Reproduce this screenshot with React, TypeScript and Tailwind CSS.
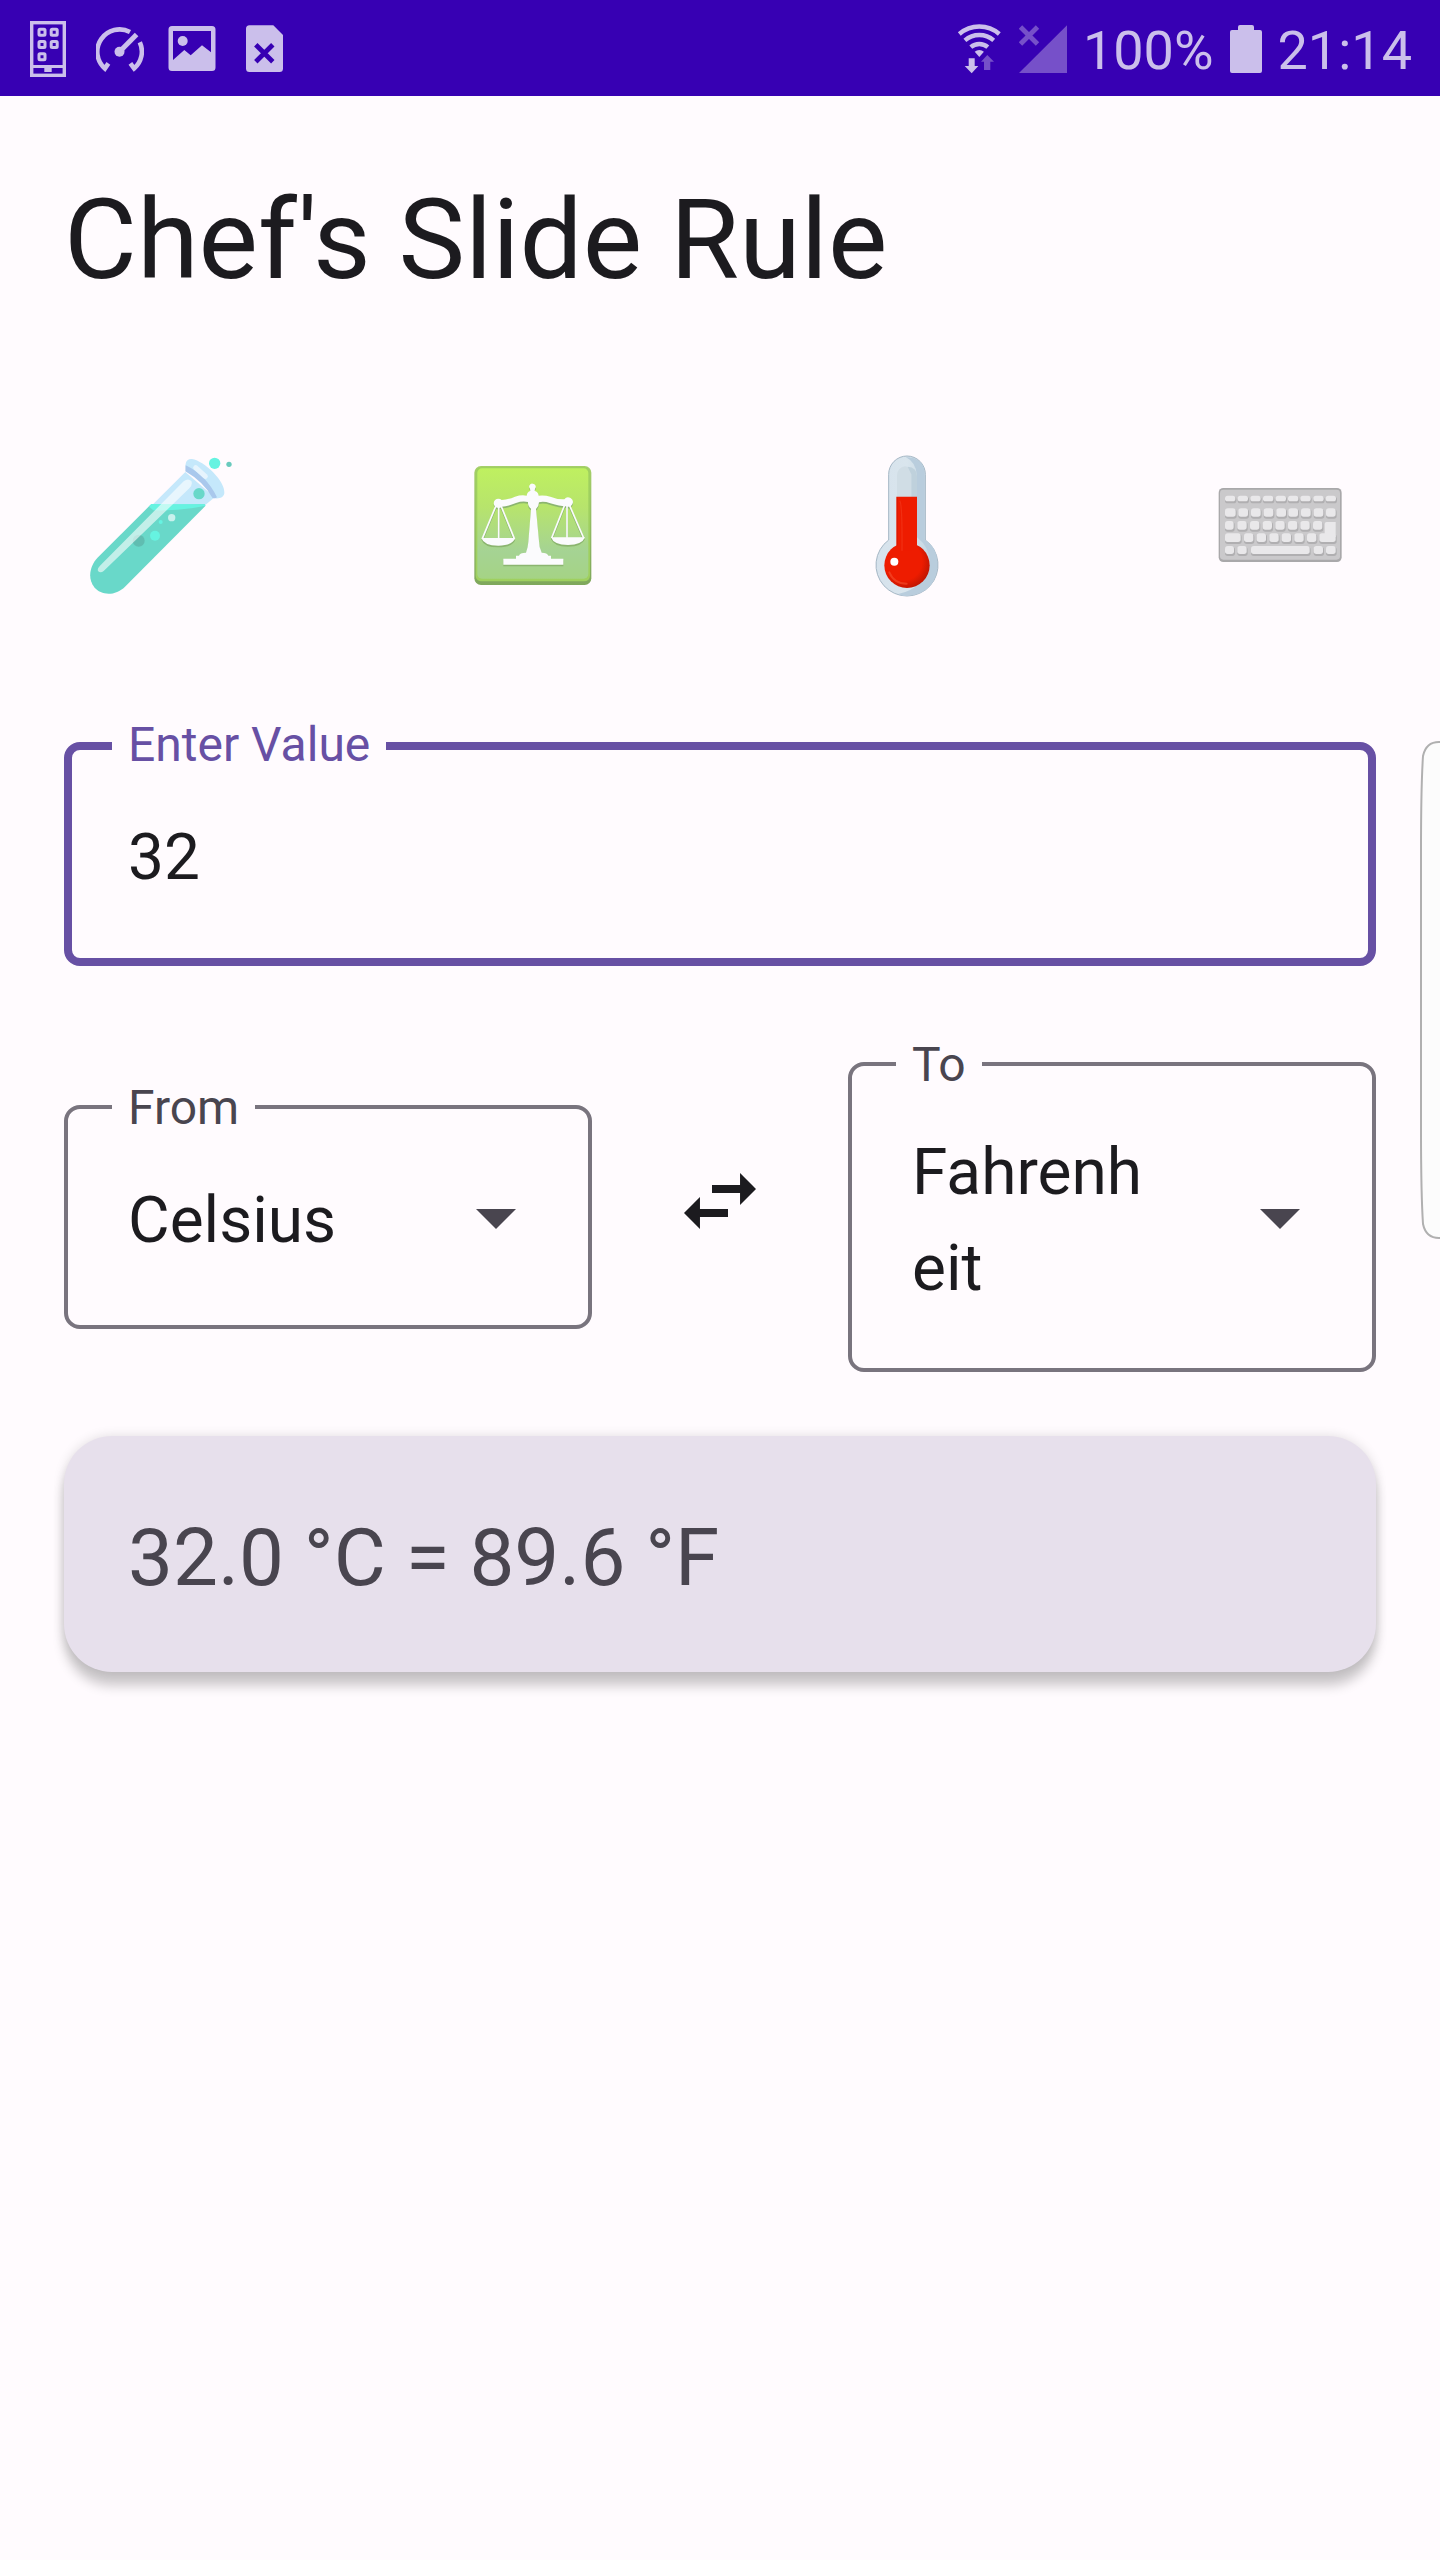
import { useState, type ReactNode } from "react";

const TINT = "#cbbfeb";
const DIM = "#7650c9";
const BAR = "#3700b3";

function StatusIcon({ children }: { children: ReactNode }) {
  return (
    <svg viewBox="0 0 48 64" className="h-16 w-12 shrink-0" fill={TINT} aria-hidden="true">
      {children}
    </svg>
  );
}

function StatusBar() {
  return (
    <header className="flex h-24 items-center justify-between bg-[#3700b3] pr-7 pl-6 text-[#cbbfeb]">
      <div className="flex items-center gap-6">
        <StatusIcon>
          <g fill="none" stroke={TINT} strokeWidth="3.4">
            <rect x="7.7" y="6.7" width="32.6" height="52.6" />
            <path d="M7 50.5h34" strokeWidth="3" />
            <g strokeWidth="3">
              <rect x="15" y="13.2" width="6" height="6" rx="1" />
              <rect x="27.2" y="13.2" width="6" height="6" rx="1" />
              <rect x="15" y="25.5" width="6" height="6" rx="1" />
              <rect x="27.2" y="25.5" width="6" height="6" rx="1" />
              <rect x="15" y="37.7" width="6" height="6" rx="1" />
            </g>
          </g>
          <path d="M20.3 51h7.4v5h-7.4z" />
        </StatusIcon>
        <StatusIcon>
          <g fill="none" stroke={TINT} strokeWidth="4.6">
            <path d="M12.4 47.4 8.9 52.5A22.3 22.3 0 0 1 34 16" />
            <path d="M43.8 26.2a22.3 22.3 0 0 1-5.7 26.3l-3.7-5.1" />
            <path d="M23.5 35.7 40.6 18.6" strokeWidth="5" />
          </g>
          <circle cx="23.5" cy="35.7" r="5" />
        </StatusIcon>
        <StatusIcon>
          <path
            fillRule="evenodd"
            d="M4 10h40a3.5 3.5 0 0 1 3.5 3.5v38a3.5 3.5 0 0 1-3.5 3.5H4a3.5 3.5 0 0 1-3.5-3.5v-38A3.5 3.5 0 0 1 4 10zM5 15v29l11.3-10 6.4 5.3 11.300-10 9 7V15z"
          />
          <circle cx="14.7" cy="25" r="5" />
        </StatusIcon>
        <StatusIcon>
          <path d="M9.5 9.3h23.8l9.7 9.7v33.5a3.5 3.5 0 0 1-3.5 3.5h-30A3.5 3.5 0 0 1 6 52.5v-39.7a3.5 3.5 0 0 1 3.5-3.5z" />
          <path d="m15.8 28.800 17 17m0-17-17 17" stroke={BAR} strokeWidth="4.8" />
        </StatusIcon>
      </div>
      <div className="flex items-center gap-4 text-[54px] leading-none">
        <StatusIcon>
          <g fill="none" stroke={TINT} strokeWidth="4.4">
            <path d="M4.3 18a30.5 30.5 0 0 1 40 0" />
            <path d="M9.9 24.4a22 22 0 0 1 28.8 0" />
            <path d="M15.8 31.2a13 13 0 0 1 17 0" />
          </g>
          <path d="m24.3 41-4.6-5.300a7 7 0 0 1 9.2 0z" />
          <path d="M13.7 42.3h6V50h3.6l-6.6 7.3L9.7 50h4z" />
          <path d="M29 54h6.3v-8.300H39L32.300 39 26 45.7h3z" fill={DIM} />
        </StatusIcon>
        <StatusIcon>
          <path d="M0 57h48V9.3z" fill={DIM} />
          <path d="m1.5 11 17 17m0-17-17 17" stroke={DIM} strokeWidth="4.8" />
        </StatusIcon>
        <span className="pt-1.5">100%</span>
        <svg viewBox="0 0 32 64" className="h-16 w-8 shrink-0" fill={TINT} aria-hidden="true">
          <path d="M10 9h12a2 2 0 0 1 2 2v3h6a2 2 0 0 1 2 2v39a2 2 0 0 1-2 2H2a2 2 0 0 1-2-2V16a2 2 0 0 1 2-2h6v-3a2 2 0 0 1 2-2z" />
        </svg>
        <time className="pt-1.5">21:14</time>
      </div>
    </header>
  );
}

function TestTube() {
  return (
    <svg viewBox="-18 -33 576 576" className="size-48" aria-hidden="true">
      <path d="M346 96 240 202 405 196 434 172z" fill="#c5e8fb" />
      <path d="M240 196 404 193 406 198 165 440C137 468 94 468 73 442 52 415 59 378 84 352z" fill="#69d8c9" />
      <path d="M237 200 243 192 404 193 407 197Q330 214 250 211z" fill="#66f3e1" />
      <path d="M349 91C343 72 348 55 366 57 404 63 467 125 463 160 461 174 444 178 430 174Q400 122 349 91z" fill="#c5e8fb" />
      <path d="M347 76Q408 105 441 172 434 177 427 173 400 125 346 94z" fill="#a9c8ec" />
      <path d="M377 83 406 109" stroke="#e6f4fd" strokeWidth="15" strokeLinecap="round" />
      <circle cx="387" cy="161" r="17" fill="#69d8c9" />
      <circle cx="206" cy="302" r="18" fill="#60bdb1" />
      <path d="M341 124Q354 113 364 123 369 133 358 145L101 393Q91 401 84 393 81 386 90 377z" fill="#fff" opacity=".6" />
      <circle cx="305" cy="233" r="11" fill="#c9f1ed" />
      <circle cx="272" cy="246" r="6" fill="#66f3e1" />
      <circle cx="255" cy="287" r="15" fill="#66f3e1" />
      <circle cx="434" cy="70" r="17" fill="#66f3e1" />
      <circle cx="477" cy="73" r="8" fill="#69cabd" />
    </svg>
  );
}

function Scales() {
  return (
    <svg viewBox="-68 -63 576 576" className="size-48" aria-hidden="true">
      <defs>
        <linearGradient id="tile" x1="0" y1="0" x2="0" y2="1">
          <stop offset="0" stopColor="#bff060" />
          <stop offset=".35" stopColor="#b7e46c" />
          <stop offset=".75" stopColor="#a5d393" />
          <stop offset="1" stopColor="#a5d385" />
        </linearGradient>
        <linearGradient id="edge" x1="0" y1="0" x2="0" y2="1">
          <stop offset="0" stopColor="#a6cf6a" />
          <stop offset="1" stopColor="#7fa75c" />
        </linearGradient>
      </defs>
      <rect x="44" y="48" width="351" height="357" rx="20" fill="url(#edge)" />
      <rect x="48" y="52" width="343" height="342" rx="17" fill="#9fd05f" />
      <rect x="53" y="55" width="333" height="331" rx="14" fill="url(#tile)" />
      {[
        { fill: "#8bb56f", dy: 5 },
        { fill: "#fbfbfd", dy: 0 },
      ].map((layer) => (
        <g key={layer.fill} fill={layer.fill} transform={`translate(0 ${layer.dy})`}>
          <path d="M219 101a9 9 0 0 1 7 15l-1 7q10 2 12 14 18-2 35 3 22 9 42 8a14 14 0 1 1 6 21q-16 1-48-9-20-7-34-3 0 12-9 20l9 97q0 18 8 34 17 0 20 9h8v9h37v18H131v-18h38v-9h9q2-9 21-9 6-15 7-32l8-100q-10-7-9-20-17-4-36 3-26 11-43 11a14 14 0 1 1 0-20q17 0 40-10 19-6 35-3 2-12 11-14l-1-7a9 9 0 0 1 8-15z" />
          <path d="M65 264h102q-9 23-51 23-43 0-51-23zM274 262h102q-9 23-51 23-43 0-51-23z" />
          <path
            d="M117 155v112M112 160 68 266M121 160l43 106M322 155v110M317 160l-41 104M327 160l45 104"
            fill="none"
            stroke={layer.fill}
            strokeWidth="5"
          />
        </g>
      ))}
    </svg>
  );
}

function Thermometer() {
  return (
    <svg viewBox="-118 -33 576 576" className="size-48" aria-hidden="true">
      <defs>
        <linearGradient id="glass" x1="0" y1="0" x2="1" y2="0">
          <stop offset="0" stopColor="#d6e2ec" />
          <stop offset=".5" stopColor="#d9e5ed" />
          <stop offset="1" stopColor="#bdd0de" />
        </linearGradient>
        <radialGradient id="bulb" gradientUnits="userSpaceOnUse" cx="158" cy="364" r="88">
          <stop offset=".65" stopColor="#ee1c00" />
          <stop offset="1" stopColor="#b91503" />
        </radialGradient>
      </defs>
      <path
        d="M115 103a55 55 0 0 1 110 0v197a93 93 0 1 1-110 0z"
        fill="url(#glass)"
        stroke="#a5b7c5"
        strokeWidth="3"
      />
      <path d="M166 51q58 2 57 54v195q38 20 38 73-2 88-91 95-20 0-26-6 78-16 94-89 3-49-38-81V107q-2-40-34-56z" fill="#b9cddd" />
      <path d="M140 172v-66q2-24 24-27 18 2 19 27v66z" fill="#d0dde5" />
      <path d="M183 172v-69l-11-23q28 2 28 28v64z" fill="#bfd1dc" />
      <circle cx="170" cy="376" r="68" fill="url(#bulb)" />
      <path d="M138 170h62v150q-30 26-62 0z" fill="#ee1c00" />
      <path d="M141 172v145" stroke="#c81804" strokeWidth="3" opacity=".5" />
      <path d="M148 182q8 6 7 150" fill="none" stroke="#f43b1c" strokeWidth="4" opacity=".6" />
      <path d="M117 397q14 34 52 34" fill="none" stroke="#f5502f" strokeWidth="6" strokeLinecap="round" opacity=".6" />
      <circle cx="132" cy="365" r="12" fill="#fff" />
    </svg>
  );
}

type Key = { x: number; y: number; w: number; h: number };

const keyRow = (y: number, h: number, spans: [number, number][]): Key[] =>
  spans.map(([x, w]) => ({ x, y, w, h }));

const KEYS: Key[] = [
  ...keyRow(77, 17, [[75, 31], [113, 31], [151, 31], [189, 31], [227, 31], [264, 31], [301, 31], [340, 31], [377, 31]]),
  ...keyRow(115, 25, [[75, 32], [115, 29], [153, 29], [191, 29], [229, 29], [265, 29], [303, 29], [341, 29], [378, 29]]),
  ...keyRow(153, 26, [[75, 26], [112, 28], [150, 28], [188, 28], [226, 28], [264, 28], [301, 28], [339, 28]]),
  ...keyRow(190, 26, [[75, 47], [132, 28], [170, 28], [208, 28], [245, 28], [283, 28], [321, 28], [358, 49]]),
  ...keyRow(228, 24, [[75, 27], [112, 28], [153, 176], [341, 28], [378, 29]]),
];

function Keyboard() {
  return (
    <svg viewBox="-48 -123 576 576" className="size-48" aria-hidden="true">
      <rect x="56" y="54" width="369" height="222" rx="14" fill="#a9a8aa" />
      <rect x="60" y="59" width="360" height="210" rx="10" fill="#cac9cb" />
      {KEYS.map((k) => (
        <g key={`${k.x}-${k.y}`}>
          <rect x={k.x} y={k.y + 3} width={k.w + 3} height={k.h + 3} rx="8" fill="#b0afb1" />
          <rect x={k.x} y={k.y} width={k.w} height={k.h} rx="8" fill="#e9e8ea" />
        </g>
      ))}
      <path d="M374 162q0-6 6-6h27v45h-33z" fill="#e9e8ea" />
    </svg>
  );
}

const MODES = [
  { name: "Volume", icon: <TestTube /> },
  { name: "Weight", icon: <Scales /> },
  { name: "Temperature", icon: <Thermometer /> },
  { name: "Keyboard", icon: <Keyboard /> },
];

const UNITS = ["Celsius", "Fahrenheit"];

function UnitField({
  id,
  label,
  value,
  onChange,
}: {
  id: string;
  label: string;
  value: string;
  onChange: (unit: string) => void;
}) {
  return (
    <div className="min-w-0 flex-1 pt-8">
      <div className="relative flex min-h-56 items-center rounded-2xl border-4 border-[#79747e] pt-[59px] pr-11 pb-[51px] pl-[60px]">
        <label
          htmlFor={id}
          className="absolute -top-8 left-11 bg-[#fffbfe] px-4 text-5xl leading-[62px] text-[#49454f]"
        >
          {label}
        </label>
        <span aria-hidden="true" className="mr-18 min-w-0 flex-1 text-[64px] leading-[96px] break-all">
          {value}
        </span>
        <svg viewBox="0 0 24 24" className="-my-12 mb-[-40px] size-24 shrink-0" fill="#49454f" aria-hidden="true">
          <path d="m7 10 5 5 5-5z" />
        </svg>
        <select
          id={id}
          value={value}
          onChange={(e) => onChange(e.target.value)}
          className="absolute inset-0 size-full cursor-pointer appearance-none opacity-0"
        >
          {UNITS.map((u) => (
            <option key={u}>{u}</option>
          ))}
        </select>
      </div>
    </div>
  );
}

function convert(value: number, from: string, to: string) {
  if (from === to) return value;
  return from === "Celsius" ? (value * 9) / 5 + 32 : ((value - 32) * 5) / 9;
}

export default function App() {
  const [value, setValue] = useState("32");
  const [from, setFrom] = useState("Celsius");
  const [to, setTo] = useState("Fahrenheit");
  const amount = Number(value) || 0;

  const swap = () => {
    setFrom(to);
    setTo(from);
  };

  return (
    <div className="relative min-h-screen overflow-x-hidden bg-[#fffbfe] font-[Roboto,sans-serif] text-[#1c1b1f]">
      <StatusBar />
      <main className="px-16 pt-16">
        <h1 className="text-[112px] leading-[160px]">Chef's Slide Rule</h1>

        <nav aria-label="Converter" className="mt-[109px] mb-[89px] flex justify-between">
          {MODES.map((m) => (
            <button key={m.name} type="button" aria-label={m.name} className="size-48">
              {m.icon}
            </button>
          ))}
        </nav>

        <div className="pt-8">
          <div className="relative h-56 rounded-2xl border-8 border-[#6750a4]">
            <label
              htmlFor="amount"
              className="absolute -top-9 left-10 bg-[#fffbfe] px-4 text-5xl leading-[62px] text-[#6750a4]"
            >
              Enter Value
            </label>
            <input
              id="amount"
              inputMode="decimal"
              value={value}
              onChange={(e) => setValue(e.target.value)}
              className="size-full bg-transparent px-14 pt-[6px] text-[64px] outline-none"
            />
          </div>
        </div>

        <div className="mt-8 flex items-center pt-8">
          <UnitField id="from" label="From" value={from} onChange={setFrom} />
          <div className="flex w-64 shrink-0 justify-center">
            <button type="button" aria-label="Swap units" onClick={swap}>
              <svg viewBox="0 0 24 24" className="size-24" fill="#1c1b1f" aria-hidden="true">
                <path d="M6.990 11 3 15l3.990 4v-3H14v-2H6.990v-3zM21 9l-3.990-4v3H10v2h7.010v3L21 9z" />
              </svg>
            </button>
          </div>
          <UnitField id="to" label="To" value={to} onChange={setTo} />
        </div>

        <output
          htmlFor="amount from to"
          className="mt-16 block rounded-[48px] bg-[#e7e0ec] px-16 pt-[68px] pb-[60px] text-[80px] leading-[108px] text-[#49454f] shadow-[0_14px_12px_rgba(0,0,0,0.2),0_0_12px_rgba(0,0,0,0.12)]"
        >
          {amount.toFixed(1)} °{from[0]} = {convert(amount, from, to).toFixed(1)} °{to[0]}
        </output>
      </main>

      <svg viewBox="0 0 20 498" className="absolute top-[741px] right-0 h-[498px] w-5" aria-hidden="true">
        <path
          d="M22 1h-3Q6 1 3 15 1 45 1 110v278q0 65 2 95 3 14 16 14h3"
          fill="#fcfcfc"
          stroke="#b0b0b0"
          strokeWidth="2"
        />
      </svg>
    </div>
  );
}
